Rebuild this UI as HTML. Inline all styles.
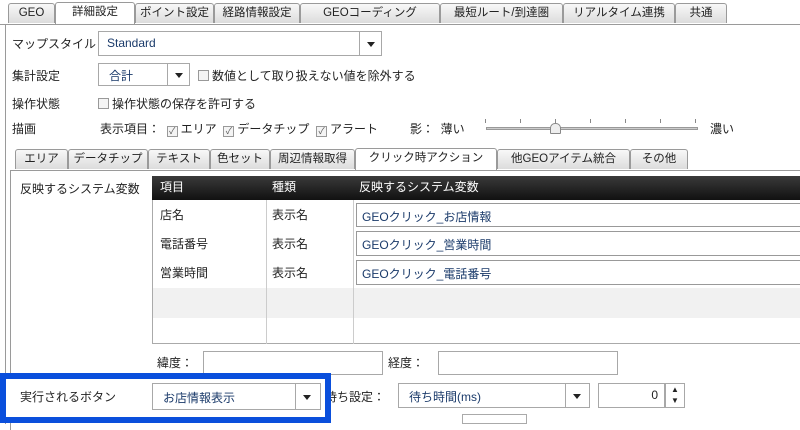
<!DOCTYPE html><html><head><meta charset="utf-8"><style>
*{box-sizing:border-box;margin:0;padding:0}
body{width:800px;height:422px;background:#fff;position:relative;overflow:hidden;font-family:"Liberation Sans","Noto Sans CJK JP",sans-serif;font-size:12px;color:#222}
.a{position:absolute;white-space:nowrap}
.tab{position:absolute;height:20px;border:1px solid #9a9a9a;border-bottom:none;background:linear-gradient(#f8f8f8,#dcdcdc);text-align:center;line-height:19px;font-size:11.5px;border-radius:3px 3px 0 0}
.tab.on{background:#fff;height:22px}
.box{position:absolute;border:1px solid #a8a8a8;background:#fff}
.btn{position:absolute;border-left:1px solid #a8a8a8;top:0;bottom:0;width:22px;right:0;background:#fff}
.btn:after{content:"";position:absolute;left:7px;top:50%;margin-top:-2px;border:4px solid transparent;border-top:5px solid #222;border-bottom:0}
.cb{display:inline-block;width:11px;height:11px;border:1px solid #999;vertical-align:-1px;margin-right:3px;background:#f4f4f4;font-size:9px;line-height:9px;text-align:center;color:#555}
.t{color:#1a3a6a}
.tk{position:absolute;top:119px;width:1px;height:4px;background:#888}
</style></head><body>
<div class="a" style="left:0;top:24px;width:800px;border-top:1px solid #9a9a9a"></div>
<div class="a" style="left:5px;top:24px;height:400px;border-left:1px solid #9a9a9a"></div>
<div class="tab" style="left:8px;top:3px;width:47px">GEO</div>
<div class="tab on" style="left:55px;top:2px;width:80px">詳細設定</div>
<div class="tab" style="left:135px;top:3px;width:79px">ポイント設定</div>
<div class="tab" style="left:214px;top:3px;width:86px">経路情報設定</div>
<div class="tab" style="left:300px;top:3px;width:140px">GEOコーディング</div>
<div class="tab" style="left:440px;top:3px;width:123px">最短ルート/到達圏</div>
<div class="tab" style="left:563px;top:3px;width:112px">リアルタイム連携</div>
<div class="tab" style="left:675px;top:3px;width:52px">共通</div>

<div class="a" style="left:12px;top:35px">マップスタイル</div>
<div class="box" style="left:98px;top:31px;width:284px;height:25px"><span class="a t" style="left:8px;top:4px">Standard</span><div class="btn"></div></div>
<div class="a" style="left:12px;top:67px">集計設定</div>
<div class="box" style="left:98px;top:63px;width:92px;height:23px"><span class="a t" style="left:10px;top:3px">合計</span><div class="btn"></div></div>
<div class="a" style="left:198px;top:67px"><span class="cb"></span>数値として取り扱えない値を除外する</div>
<div class="a" style="left:12px;top:95px">操作状態</div>
<div class="a" style="left:98px;top:95px"><span class="cb"></span>操作状態の保存を許可する</div>
<div class="a" style="left:12px;top:120px">描画</div>
<div class="a" style="left:100px;top:120px">表示項目：&nbsp; <span class="cb">✓</span>エリア&nbsp; <span class="cb">✓</span>データチップ&nbsp; <span class="cb">✓</span>アラート</div>
<div class="a" style="left:410px;top:120px">影：&nbsp; 薄い</div>
<div class="tk" style="left:485px"></div><div class="tk" style="left:520px"></div><div class="tk" style="left:555px"></div><div class="tk" style="left:590px"></div><div class="tk" style="left:625px"></div><div class="tk" style="left:660px"></div><div class="tk" style="left:695px"></div>
<div class="a" style="left:486px;top:127px;width:212px;height:3px;background:#ccc;border:1px solid #999"></div>
<div class="a" style="left:550px;top:123px;width:11px;height:11px;background:#eee;border:1px solid #888;border-radius:5px 5px 1px 1px"></div>
<div class="a" style="left:710px;top:120px">濃い</div>

<div class="a" style="left:10px;top:170px;width:790px;border-top:1px solid #9a9a9a"></div>
<div class="a" style="left:10px;top:170px;height:260px;border-left:1px solid #9a9a9a"></div>
<div class="tab" style="left:15px;top:149px;width:53px">エリア</div>
<div class="tab" style="left:68px;top:149px;width:80px">データチップ</div>
<div class="tab" style="left:148px;top:149px;width:62px">テキスト</div>
<div class="tab" style="left:210px;top:149px;width:60px">色セット</div>
<div class="tab" style="left:270px;top:149px;width:85px">周辺情報取得</div>
<div class="tab on" style="left:355px;top:148px;width:142px">クリック時アクション</div>
<div class="tab" style="left:497px;top:149px;width:133px">他GEOアイテム統合</div>
<div class="tab" style="left:630px;top:149px;width:58px">その他</div>

<div class="a" style="left:20px;top:180px">反映するシステム変数</div>
<div class="a" style="left:152px;top:176px;width:650px;height:168px;border:1px solid #aaa;background:#fff"></div>
<div class="a" style="left:152px;top:176px;width:648px;height:24px;background:linear-gradient(#3a3a3a,#111);color:#fff;line-height:23px"><span class="a" style="left:8px">項目</span><span class="a" style="left:120px">種類</span><span class="a" style="left:207px">反映するシステム変数</span></div>
<div class="a" style="left:153px;top:288px;width:647px;height:30px;background:#f1f1f1"></div>
<div class="a" style="left:266px;top:200px;height:144px;border-left:1px solid #ccc"></div>
<div class="a" style="left:353px;top:200px;height:144px;border-left:1px solid #ccc"></div>
<div class="a" style="left:160px;top:206px">店名</div><div class="a" style="left:272px;top:206px">表示名</div>
<div class="a" style="left:160px;top:235px">電話番号</div><div class="a" style="left:272px;top:235px">表示名</div>
<div class="a" style="left:160px;top:264px">営業時間</div><div class="a" style="left:272px;top:264px">表示名</div>
<div class="box" style="left:356px;top:203px;width:450px;height:24px;border-color:#999"><span class="a t" style="left:5px;top:4px">GEOクリック_お店情報</span></div>
<div class="box" style="left:356px;top:231px;width:450px;height:25px;border-color:#999"><span class="a t" style="left:5px;top:4px">GEOクリック_営業時間</span></div>
<div class="box" style="left:356px;top:260px;width:450px;height:25px;border-color:#999"><span class="a t" style="left:5px;top:4px">GEOクリック_電話番号</span></div>

<div class="a" style="left:157px;top:354px">緯度：</div>
<div class="box" style="left:203px;top:351px;width:180px;height:24px"></div>
<div class="a" style="left:388px;top:354px">経度：</div>
<div class="box" style="left:438px;top:351px;width:180px;height:24px"></div>

<div class="a" style="left:325px;top:388px">待ち設定：</div>
<div class="box" style="left:398px;top:383px;width:192px;height:25px"><span class="a t" style="left:10px;top:4px">待ち時間(ms)</span><div class="btn" style="width:24px"></div></div>
<div class="box" style="left:598px;top:383px;width:67px;height:25px"><span class="a" style="right:6px;top:4px">0</span></div>
<div class="box" style="left:665px;top:383px;width:20px;height:25px;font-size:8px;text-align:center;line-height:11px">▲<br>▼</div>
<div class="a" style="left:462px;top:414px;width:65px;height:10px;border:1px solid #aaa"></div>

<div class="a" style="left:0;top:373px;width:331px;height:50px;border:6px solid #0a4fdc;background:#fff"></div>
<div class="a" style="left:20px;top:388px">実行されるボタン</div>
<div class="box" style="left:152px;top:383px;width:169px;height:27px"><span class="a t" style="left:10px;top:5px">お店情報表示</span><div class="btn" style="width:25px"></div></div>
</body></html>
